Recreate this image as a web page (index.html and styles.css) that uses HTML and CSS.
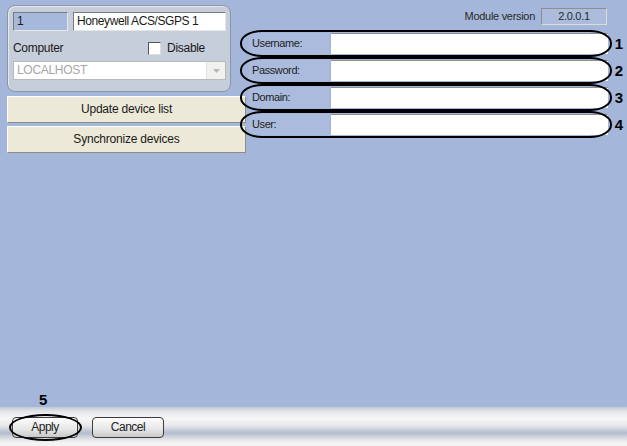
FILE: index.html
```html
<!DOCTYPE html>
<html lang="en">
<head>
    <meta charset="UTF-8">
    <title>Honeywell ACS/SGPS settings</title>
    <link rel="stylesheet" href="styles.css">
</head>
<body>
    <div class="app">
        <main class="content">

            <section class="left">
                <div class="panel">
                    <div class="row-top">
                        <div class="id-box">1</div>
                        <div class="name-box">Honeywell ACS/SGPS 1</div>
                    </div>
                    <div class="row-mid">
                        <span>Computer</span>
                        <label class="disable"><span class="check"></span>Disable</label>
                    </div>
                    <div class="combo">
                        <span>LOCALHOST</span>
                        <span class="drop">
                            <svg width="7" height="4" viewBox="0 0 7 4"><path d="M0 0h7L3.5 4z" fill="#b8b8b8"/></svg>
                        </span>
                    </div>
                </div>
                <div class="btn-wide">Update device list</div>
                <div class="btn-wide">Synchronize devices</div>
            </section>

            <section class="right">
                <div class="version">
                    <span>Module version</span>
                    <div class="version-box">2.0.0.1</div>
                </div>

                <div class="field">
                    <div class="field-label">Username:</div>
                    <div class="field-input"></div>
                    <span class="mark">1</span>
                </div>
                <div class="field">
                    <div class="field-label">Password:</div>
                    <div class="field-input"></div>
                    <span class="mark">2</span>
                </div>
                <div class="field">
                    <div class="field-label">Domain:</div>
                    <div class="field-input"></div>
                    <span class="mark">3</span>
                </div>
                <div class="field">
                    <div class="field-label">User:</div>
                    <div class="field-input"></div>
                    <span class="mark">4</span>
                </div>
            </section>

        </main>

        <footer class="bar">
            <span class="mark-5">5</span>
            <div class="btn apply">Apply</div>
            <div class="btn">Cancel</div>
        </footer>
    </div>
</body>
</html>
```

FILE: styles.css
```css
body {
    margin: 0;
    background: #a4b6d9;
    font-family: 'Liberation Sans', Arial, sans-serif;
    font-size: 12px;
    letter-spacing: -0.3px;
    color: #1a1a1a;
}

.app {
    width: 627px;
    height: 446px;
    display: flex;
    flex-direction: column;
}

.content {
    flex: 1;
    display: flex;
    padding: 5px 0 0 7px;
}

/* left column */

.left {
    width: 240px;
}

.panel {
    width: 213px;
    padding: 6px 4px 11px 5px;
    background: #c6cddb;
    border: 1px solid #8d94a3;
    border-radius: 8px;
    box-shadow: inset 1px 1px 0 #e4e8ef;
}

.row-top {
    display: flex;
    gap: 5px;
}

.id-box,
.name-box {
    height: 17px;
    line-height: 17px;
    padding-left: 3px;
    border: 1px solid #7a7a7a;
    border-right-color: #e6e6e6;
    border-bottom-color: #e6e6e6;
}

.id-box {
    width: 50px;
    background: #a6b8dc;
}

.name-box {
    flex: 1;
    background: #fff;
    letter-spacing: -0.4px;
}

.row-mid {
    display: flex;
    justify-content: space-between;
    align-items: center;
    height: 30px;
    padding: 4px 21px 0 0;
    box-sizing: border-box;
}

.disable {
    display: flex;
    align-items: center;
    gap: 6px;
}

.check {
    width: 11px;
    height: 11px;
    background: #fff;
    border: 1px solid #555;
    border-right-color: #ddd;
    border-bottom-color: #ddd;
}

.combo {
    display: flex;
    justify-content: space-between;
    height: 17px;
    line-height: 17px;
    padding-left: 3px;
    background: #fff;
    border: 1px solid #b9b9b9;
    color: #a7a7a7;
}

.drop {
    width: 18px;
    display: flex;
    align-items: center;
    justify-content: center;
    background: #f1f1ee;
    border-left: 1px solid #e2e2e2;
}

.btn-wide {
    width: 237px;
    height: 25px;
    line-height: 25px;
    margin-top: 3px;
    text-align: center;
    background: #ece9d8;
    border: 1px solid #fff;
    border-right-color: #8e8d86;
    border-bottom-color: #8e8d86;
    letter-spacing: -0.2px;
}

.panel + .btn-wide {
    margin-top: 4px;
}

/* right column */

.right {
    flex: 1;
    padding-left: 2px;
}

.version {
    display: flex;
    justify-content: flex-end;
    align-items: center;
    gap: 6px;
    height: 20px;
    margin-top: 1px;
    padding-right: 20px;
    color: #2a2a2a;
    font-size: 11px;
}

.version-box {
    width: 66px;
    height: 17px;
    line-height: 15px;
    box-sizing: border-box;
    border: 1px solid #8e8e8e;
    border-right-color: #dcdcdc;
    border-bottom-color: #dcdcdc;
    background: #abbcdc;
    text-align: center;
}

.field {
    position: relative;
    display: flex;
    gap: 2px;
    width: 359px;
    height: 21px;
    margin-top: 6px;
}

.version + .field {
    margin-top: 7px;
}

.field-label {
    width: 80px;
    line-height: 21px;
    padding-left: 3px;
    box-sizing: border-box;
    background: #aabbdd;
    color: #222;
    font-size: 11px;
    letter-spacing: -0.4px;
}

.field-input {
    flex: 1;
    background: #fff;
    border-top: 1px solid #8f8f8f;
}

/* annotation outlines */

.field::after {
    content: "";
    position: absolute;
    left: -9px;
    right: -4px;
    top: -3px;
    bottom: -3px;
    border: 2.5px solid #000;
    border-radius: 22px / 13px;
}

.mark {
    position: absolute;
    right: -15px;
    top: 2px;
    font-weight: bold;
    font-size: 15px;
    letter-spacing: 0;
    color: #000;
}

/* bottom bar */

.bar {
    position: relative;
    height: 39px;
    display: flex;
    align-items: center;
    gap: 14px;
    padding: 2px 0 0 12px;
    box-sizing: border-box;
    background: linear-gradient(#c3c9d4 0, #e6e8ec 5px, #f6f6f6 12px, #e4e6ea 19px, #b4bccb 26px, #d8dce4 31px, #f4f4f4 36px);
}

.mark-5 {
    position: absolute;
    left: 39px;
    top: -16px;
    font-weight: bold;
    font-size: 15px;
    letter-spacing: 0;
    color: #000;
}

.btn {
    width: 70px;
    height: 19px;
    line-height: 19px;
    text-align: center;
    border: 1px solid #3c3c3c;
    border-radius: 4px;
    background: linear-gradient(#fdfdfd, #e6e6e6 60%, #c9c9c9);
    color: #222;
    letter-spacing: -0.5px;
}

.apply {
    position: relative;
    width: 64px;
}

.apply::after {
    content: "";
    position: absolute;
    left: -4px;
    right: -5px;
    top: -4px;
    bottom: -4px;
    border: 2.5px solid #000;
    border-radius: 50%;
}
```
